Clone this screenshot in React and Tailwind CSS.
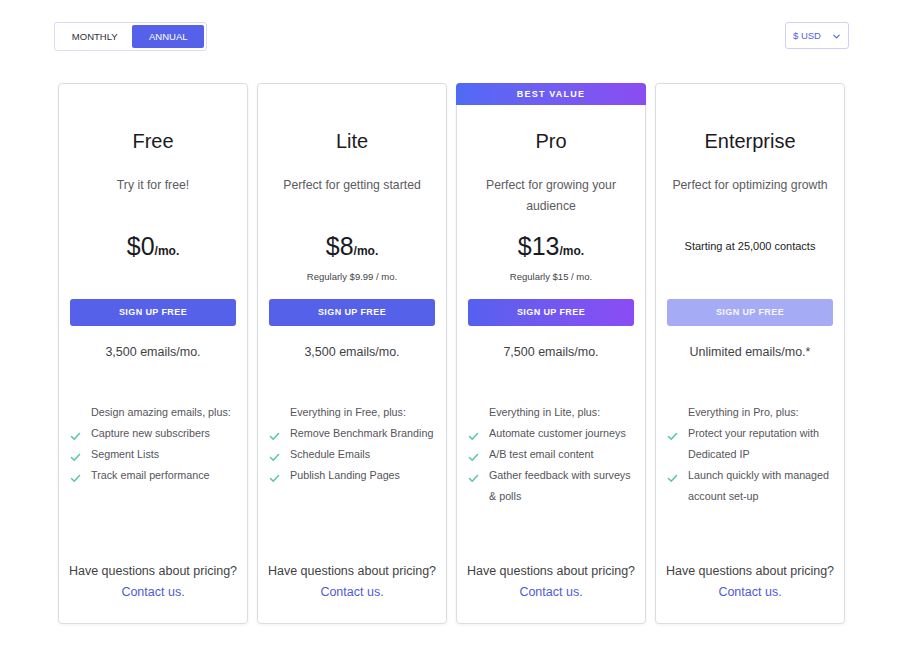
import { ChevronDown } from 'lucide-react'

// Pricing plans shown in the table
const PLANS = [
  {
    name: 'Free',
    subtitle: 'Try it for free!',
    price: '$0',
    regular: null,
    emails: '3,500 emails/mo.',
    lead: 'Design amazing emails, plus:',
    features: ['Capture new subscribers', 'Segment Lists', 'Track email performance'],
  },
  {
    name: 'Lite',
    subtitle: 'Perfect for getting started',
    price: '$8',
    regular: 'Regularly $9.99 / mo.',
    emails: '3,500 emails/mo.',
    lead: 'Everything in Free, plus:',
    features: ['Remove Benchmark Branding', 'Schedule Emails', 'Publish Landing Pages'],
  },
  {
    name: 'Pro',
    subtitle: 'Perfect for growing your audience',
    price: '$13',
    regular: 'Regularly $15 / mo.',
    emails: '7,500 emails/mo.',
    lead: 'Everything in Lite, plus:',
    features: ['Automate customer journeys', 'A/B test email content', 'Gather feedback with surveys & polls'],
    best: true,
  },
  {
    name: 'Enterprise',
    subtitle: 'Perfect for optimizing growth',
    starting: 'Starting at 25,000 contacts',
    emails: 'Unlimited emails/mo.*',
    lead: 'Everything in Pro, plus:',
    features: ['Protect your reputation with Dedicated IP', 'Launch quickly with managed account set-up'],
    muted: true,
  },
]

const Check = () => (
  <svg width="11" height="9" viewBox="0 0 11 9" className="shrink-0 mt-[9px]">
    <polyline points="1.5,4.5 4.2,7.2 9.5,1.5" fill="none" stroke="#5cc9a4" strokeWidth="1.6" strokeLinecap="round" strokeLinejoin="round" />
  </svg>
)

function PlanCard({ plan }) {
  return (
    <div className="w-[190px] h-[541px] flex flex-col bg-white border border-[#dcdde1] rounded-[4px] shadow-[0_1px_3px_rgba(0,0,0,0.06)] text-center">
      {/* Banner */}
      {plan.best ? (
        <div className="h-[22px] -mx-px -mt-px rounded-t-[4px] bg-gradient-to-r from-[#4f6af4] to-[#8a4cf1] text-white text-[9px] font-bold tracking-[1.2px] leading-[22px]">
          BEST VALUE
        </div>
      ) : (
        <div className="h-[21px]" />
      )}

      <div className="pt-[22px] text-[20px] leading-[28px] text-[#1b1b1f]">{plan.name}</div>
      <div className="mt-[20px] h-[42px] px-[10px] text-[12.25px] leading-[21px] text-[#5b5b61]">{plan.subtitle}</div>

      {plan.starting ? (
        <div className="mt-[13px] h-[32px] text-[11px] leading-[32px] text-[#1b1b1f]">{plan.starting}</div>
      ) : (
        <div className="mt-[13px] h-[32px] leading-[32px] text-[#1b1b1f]">
          <span className="text-[25px]">{plan.price}</span>
          <span className="text-[12px] font-bold">/mo.</span>
        </div>
      )}
      <div className="mt-[8px] h-[14px] text-[9.5px] leading-[14px] text-[#44444a]">{plan.regular}</div>

      <div className="mt-[14px] px-[11px]">
        <button
          className={`w-full h-[27px] rounded-[3px] text-white text-[9px] font-bold tracking-[0.4px] ${
            plan.muted
              ? 'bg-[#a5abf4] text-white/90'
              : plan.best
              ? 'bg-gradient-to-r from-[#5560ee] to-[#8a4cf4]'
              : 'bg-[#5661e9]'
          }`}
        >
          SIGN UP FREE
        </button>
      </div>

      <div className="mt-[16px] h-[20px] text-[12.5px] leading-[20px] text-[#3f3f45]">{plan.emails}</div>

      {/* Features */}
      <div className="mt-[40px] flex-1 pl-[11px] pr-[9px] text-left text-[10.75px] leading-[21px] text-[#55555b]">
        <div className="pl-[21px]">{plan.lead}</div>
        {plan.features.map((f) => (
          <div key={f} className="flex gap-[10px]">
            <Check />
            <span>{f}</span>
          </div>
        ))}
      </div>

      {/* Footer */}
      <div className="pb-[20px] text-[12.5px] leading-[21px]">
        <div className="text-[#3f3f45]">Have questions about pricing?</div>
        <div className="text-[#4f5ad8]">Contact us.</div>
      </div>
    </div>
  )
}

export default function App() {
  return (
    <div className="w-[900px] h-[649px] bg-white font-['Liberation_Sans',Arial,sans-serif] pt-[22px]">
      <div className="flex items-start justify-between pl-[54px] pr-[51px]">
        <div className="flex items-center h-[29px] w-[153px] border border-[#d8dbf4] rounded-[3px] px-[2px]">
          <div className="w-[76px] pt-px text-center text-[9.5px] font-medium text-[#2f2f35]">MONTHLY</div>
          <div className="w-[72px] h-[23px] pt-px flex items-center justify-center rounded-[2px] bg-[#5661e9] text-white text-[9.5px] font-medium">
            ANNUAL
          </div>
        </div>
        <div className="flex items-center justify-between h-[27px] w-[64px] pt-[2px] border border-[#cdd0f4] rounded-[3px] pl-[7px] pr-[6px] text-[#5661e9]">
          <span className="text-[9.5px] font-medium">$ USD</span>
          <ChevronDown size={11} strokeWidth={2.5} />
        </div>
      </div>

      <div className="mt-[32px] pl-[58px] flex gap-[9px]">
        {PLANS.map((p) => (
          <PlanCard key={p.name} plan={p} />
        ))}
      </div>
    </div>
  )
}
